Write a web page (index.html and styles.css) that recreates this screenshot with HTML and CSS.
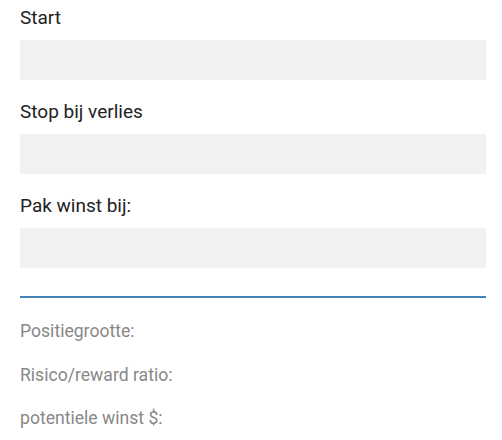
FILE: index.html
```html
<!DOCTYPE html>
<html lang="nl">
<head>
<meta charset="utf-8">
<link rel="stylesheet" href="styles.css">
</head>
<body>
<form class="calc">
  <div class="fields">
    <div class="field">
      <label class="field-label" for="start">Start</label>
      <input class="field-input" id="start" type="text">
    </div>
    <div class="field">
      <label class="field-label" for="stop">Stop bij verlies</label>
      <input class="field-input" id="stop" type="text">
    </div>
    <div class="field">
      <label class="field-label" for="winst">Pak winst bij:</label>
      <input class="field-input" id="winst" type="text">
    </div>
  </div>
  <hr class="divider">
  <div class="results">
    <div class="result">Positiegrootte:</div>
    <div class="result">Risico/reward ratio:</div>
    <div class="result">potentiele winst $:</div>
  </div>
</form>
</body>
</html>
```
FILE: styles.css
```css
html, body {
  margin: 0;
  padding: 0;
  background: #ffffff;
}
body {
  font-family: Roboto, "Liberation Sans", Arial, sans-serif;
}
.calc {
  display: flex;
  flex-direction: column;
  padding: 4px 16px 0 20px;
}
.fields {
  display: flex;
  flex-direction: column;
  gap: 18px;
}
.field {
  display: flex;
  flex-direction: column;
  gap: 8px;
}
.field-label {
  font-size: 19px;
  line-height: 28px;
  color: #222222;
}
.field-input {
  box-sizing: border-box;
  height: 40px;
  margin: 0;
  border: none;
  background: #f1f1f1;
  outline: none;
  padding: 0 10px;
  font: inherit;
}
.divider {
  margin: 28px 0 0;
  border: none;
  height: 2px;
  background: #4682b8;
}
.results {
  display: flex;
  flex-direction: column;
  margin-top: 12px;
}
.result {
  font-size: 17.6px;
  line-height: 43.5px;
  color: #888888;
}
```
